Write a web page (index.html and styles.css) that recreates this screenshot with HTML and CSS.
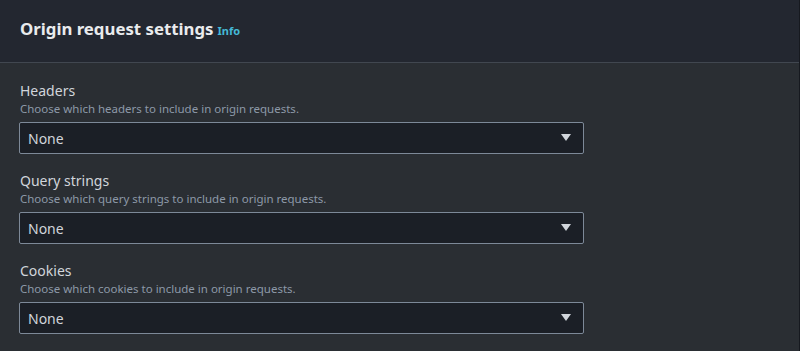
FILE: index.html
```html
<!DOCTYPE html>
<html>
<head>
<meta charset="utf-8">
<link rel="stylesheet" href="styles.css">
</head>
<body>
<div class="panel">
  <div class="header">
    <h2 class="title">Origin request settings</h2>
    <a class="info">Info</a>
  </div>
  <div class="content">
    <div class="field">
      <div class="label">Headers</div>
      <div class="desc">Choose which headers to include in origin requests.</div>
      <div class="select"><span>None</span><svg class="caret" width="10" height="8" viewBox="0 0 10 8"><path d="M0 0H10L5 7Z" fill="#d1d5db"/></svg></div>
    </div>
    <div class="field">
      <div class="label">Query strings</div>
      <div class="desc">Choose which query strings to include in origin requests.</div>
      <div class="select"><span>None</span><svg class="caret" width="10" height="8" viewBox="0 0 10 8"><path d="M0 0H10L5 7Z" fill="#d1d5db"/></svg></div>
    </div>
    <div class="field">
      <div class="label">Cookies</div>
      <div class="desc">Choose which cookies to include in origin requests.</div>
      <div class="select"><span>None</span><svg class="caret" width="10" height="8" viewBox="0 0 10 8"><path d="M0 0H10L5 7Z" fill="#d1d5db"/></svg></div>
    </div>
  </div>
</div>
</body>
</html>
```
FILE: styles.css
```css
html, body {
  margin: 0;
  padding: 0;
  background: #2a2e33;
}
body {
  font-family: "Noto Sans", "Open Sans", sans-serif;
  color: #d1d5db;
}
.panel {
  width: 799px;
  height: 351px;
  border-right: 1px solid #16191f;
  background: #2a2e33;
  overflow: hidden;
}
.header {
  height: 63px;
  background: #232730;
  border-bottom: 1px solid #414750;
  display: flex;
  align-items: baseline;
  padding: 17px 20px 0;
  box-sizing: border-box;
  gap: 4px;
}
.title {
  margin: 0;
  font-size: 16.8px;
  font-weight: 700;
  color: #e9ebed;
  line-height: 24px;
}
.info {
  font-size: 11px;
  font-weight: 700;
  color: #44b9d6;
}
.content {
  padding: 19px 0 0 19px;
  display: flex;
  flex-direction: column;
  gap: 18px;
}
.label {
  font-size: 14px;
  line-height: 18px;
  color: #d1d5db;
  padding-left: 1px;
}
.desc {
  font-size: 11.5px;
  line-height: 17px;
  color: #8d99a8;
  padding-left: 1px;
  margin-bottom: 5px;
}
.select {
  width: 565px;
  height: 32px;
  box-sizing: border-box;
  border: 1px solid #7d8998;
  border-radius: 2px;
  background: #1b1f26;
  display: flex;
  align-items: center;
  justify-content: space-between;
  padding: 0 12px 0 8px;
  font-size: 14px;
  color: #d1d5db;
}
.caret {
  display: block;
}
```
